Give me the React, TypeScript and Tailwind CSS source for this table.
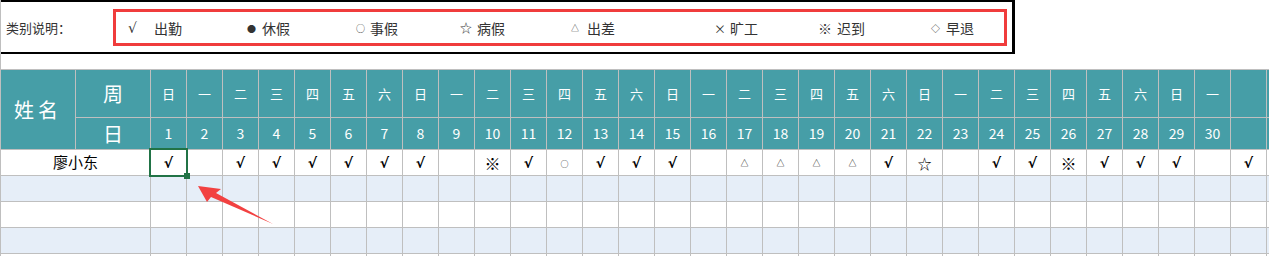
const weekNames = ['日', '一', '二', '三', '四', '五', '六']

// one attendance row, index 0 = day 1
const marks = [
  '√', '', '√', '√', '√', '√', '√', '√', '', '※', '√', '○', '√', '√', '√', '',
  '△', '△', '△', '△', '√', '☆', '', '√', '√', '※', '√', '√', '√', '', '√'
]

// legend: symbol, width of symbol slot, width of whole item
const legend = [
  { sym: '√', label: '出勤', symW: 'w-[26px]', itemW: 'w-[119px]', symCls: "text-[14px] font-['DejaVu_Sans',sans-serif]" },
  { sym: '●', label: '休假', symW: 'w-[15px]', itemW: 'w-[109px]', symCls: 'text-[9px] pt-[1px]' },
  { sym: '○', label: '事假', symW: 'w-[14px]', itemW: 'w-[104px]', symCls: 'text-[9px] pt-[2px]' },
  { sym: '☆', label: '病假', symW: 'w-[17px]', itemW: 'w-[111px]', symCls: 'text-[12px]' },
  { sym: '△', label: '出差', symW: 'w-[16px]', itemW: 'w-[143px]', symCls: 'text-[8px]' },
  { sym: '×', label: '旷工', symW: 'w-[16px]', itemW: 'w-[104px]', symCls: 'text-[12px] pt-[2px]' },
  { sym: '※', label: '迟到', symW: 'w-[19px]', itemW: 'w-[113px]', symCls: 'text-[14px]' },
  { sym: '◇', label: '早退', symW: 'w-[15px]', itemW: 'w-[60px]', symCls: 'text-[9px] pt-[1px]' }
]

const markSize: Record<string, string> = {
  '√': "text-[14px] font-bold font-['DejaVu_Sans',sans-serif]",
  '※': 'text-[16px]',
  '○': 'text-[8px] pt-[2px]',
  '△': 'text-[8px]',
  '☆': 'text-[14px]'
}

const cols = Array.from({ length: 32 }, (_, i) => i)

const App = () => {
  return (
    <div className="relative h-[256px] w-[1269px] overflow-hidden border-l border-[#bfbfbf] bg-white font-['Noto_Sans_CJK_SC',sans-serif] text-[#333]">
      {/* legend strip */}
      <div className="h-[69px]">
        <div className="flex h-[54px] w-[1014px] border-t-2 border-r-[3px] border-b-2 border-black">
          <span className="w-[112px] self-center pl-[5px] text-[13px] leading-none">类别说明：</span>
          <div className="mt-[7px] flex h-[37px] w-[894px] items-center border-[3px] border-[#f03c3c] pl-[12px]">
            {legend.map((l) => (
              <div key={l.label} className={`flex shrink-0 items-center ${l.itemW}`}>
                <span className={`${l.symW} ${l.symCls} leading-none`}>{l.sym}</span>
                <span className="text-[14px] leading-none">{l.label}</span>
              </div>
            ))}
          </div>
        </div>
      </div>

      {/* attendance sheet */}
      <div className="-ml-px grid w-max grid-cols-[74px_74px_repeat(32,35px)] grid-rows-[47px_31px_repeat(5,25px)] gap-px bg-[#bfbfbf] p-px">
        <div className="row-span-2 flex items-center justify-center bg-[#469ea7] text-[20px] tracking-[4px] text-white">
          姓名
        </div>
        <div className="flex items-center justify-center bg-[#469ea7] text-[20px] text-white">周</div>
        {cols.map((i) => (
          <div key={'w' + i} className="flex items-center justify-center bg-[#469ea7] text-[13px] text-white">
            {i < 30 ? weekNames[i % 7] : ''}
          </div>
        ))}

        <div className="flex items-center justify-center bg-[#469ea7] text-[20px] text-white">日</div>
        {cols.map((i) => (
          <div key={'d' + i} className="flex items-center justify-center bg-[#469ea7] text-[14px] text-white">
            {i < 30 ? i + 1 : ''}
          </div>
        ))}

        {[0, 1, 2, 3, 4].map((r) => {
          const bg = r % 2 === 1 ? 'bg-[#e6eef8]' : 'bg-white'
          return [
            <div
              key={'n' + r}
              className={`col-span-2 flex items-center justify-center text-[15px] text-black ${bg} ${
                r === 0 ? 'shadow-[-1px_0_0_#217346]' : ''
              }`}
            >
              {r === 0 ? '廖小东' : ''}
            </div>,
            ...cols.map((i) => {
              const m = r === 0 ? marks[i] || '' : ''
              return (
                <div key={r + '-' + i} className={`relative flex items-center justify-center text-black ${bg}`}>
                  <span className={`leading-none ${markSize[m] || ''}`}>{m}</span>
                  {r === 0 && i === 0 && (
                    // selected cell frame with fill handle
                    <div className="absolute -inset-[2px] z-10 border-2 border-[#217346]">
                      <div className="absolute -right-[4px] -bottom-[4px] size-[6px] bg-[#217346]" />
                    </div>
                  )}
                </div>
              )
            })
          ]
        })}
      </div>

      {/* red pointer arrow */}
      <svg className="pointer-events-none absolute top-0 left-0 z-20" width="1269" height="256">
        <polygon points="197,186 220,189 215,193 272,224 210,197 206,202" fill="#f24141" />
      </svg>
    </div>
  )
}

export default App
